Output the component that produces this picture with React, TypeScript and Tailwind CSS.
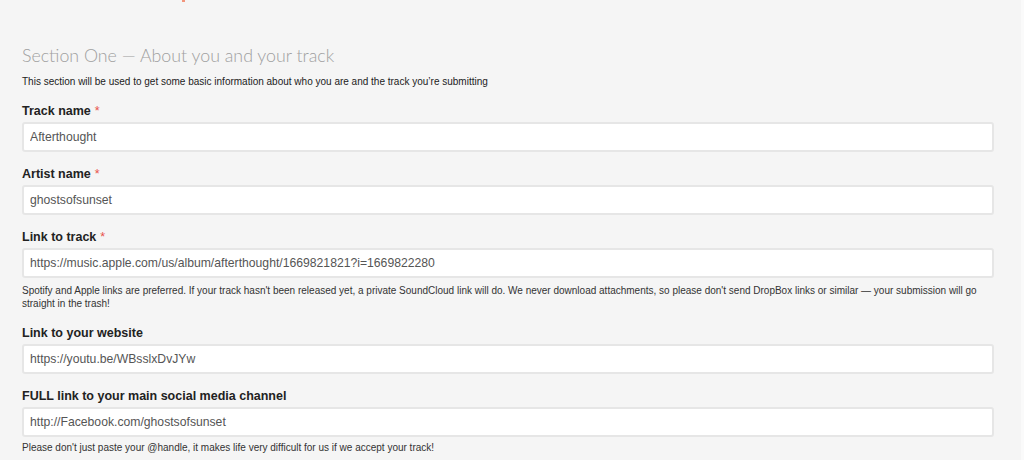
import React from "react";

const fields = [
  { label: "Track name", required: true, value: "Afterthought" },
  { label: "Artist name", required: true, value: "ghostsofsunset" },
  {
    label: "Link to track",
    required: true,
    value: "https://music.apple.com/us/album/afterthought/1669821821?i=1669822280",
    help: "Spotify and Apple links are preferred. If your track hasn't been released yet, a private SoundCloud link will do. We never download attachments, so please don't send DropBox links or similar — your submission will go straight in the trash!",
  },
  { label: "Link to your website", required: false, value: "https://youtu.be/WBsslxDvJYw" },
  {
    label: "FULL link to your main social media channel",
    required: false,
    value: "http://Facebook.com/ghostsofsunset",
    help: "Please don't just paste your @handle, it makes life very difficult for us if we accept your track!",
  },
];

export default function App() {
  return (
    <div className="w-[1024px] h-[460px] overflow-hidden bg-[#fafafa] flex">
      <div className="w-[1021px] h-full bg-[#f5f5f5] font-['Liberation_Sans',Arial,sans-serif]">
        {/* tail of the red title above, cut off */}
        <div className="pl-[182px]">
          <div className="w-[3px] h-[2px] bg-[#f2957c]" />
        </div>

        <div className="pl-[22px] pr-[27px] pt-[39px]">
          <h2 className="font-['Lato',sans-serif] font-light text-[17.8px] leading-[28px] text-[#a0a0a0]">
            Section One — About you and your track
          </h2>
          <p className="text-[10px] leading-[14px] text-[#222] mt-[6px]">
            This section will be used to get some basic information about who you are and the track you’re submitting
          </p>

          <div className="mt-[13px] flex flex-col">
            {fields.map((f, i) => (
              <div key={f.label} className="mb-[13px]">
                <label className="block text-[12.5px] leading-[18px] font-bold text-[#222]">
                  {f.label}
                  {f.required && <span className="text-[#e8514a] font-normal ml-[4px]">*</span>}
                </label>
                <input
                  readOnly
                  value={f.value}
                  className="mt-[2px] block w-full h-[30px] bg-white border-2 border-[#e6e6e6] rounded-[3px] px-[6px] text-[12.2px] text-[#555] outline-none font-['Liberation_Sans',Arial,sans-serif]"
                />
                {f.help && (
                  <p
                    className={
                      i === 2
                        ? "mt-[6px] mb-[1px] text-[10px] leading-[13px] text-[#333] pr-[14px]"
                        : "mt-[4px] text-[10px] leading-[13px] text-[#333] pr-[14px]"
                    }
                  >
                    {f.help}
                  </p>
                )}
              </div>
            ))}
          </div>
        </div>
      </div>
    </div>
  );
}
